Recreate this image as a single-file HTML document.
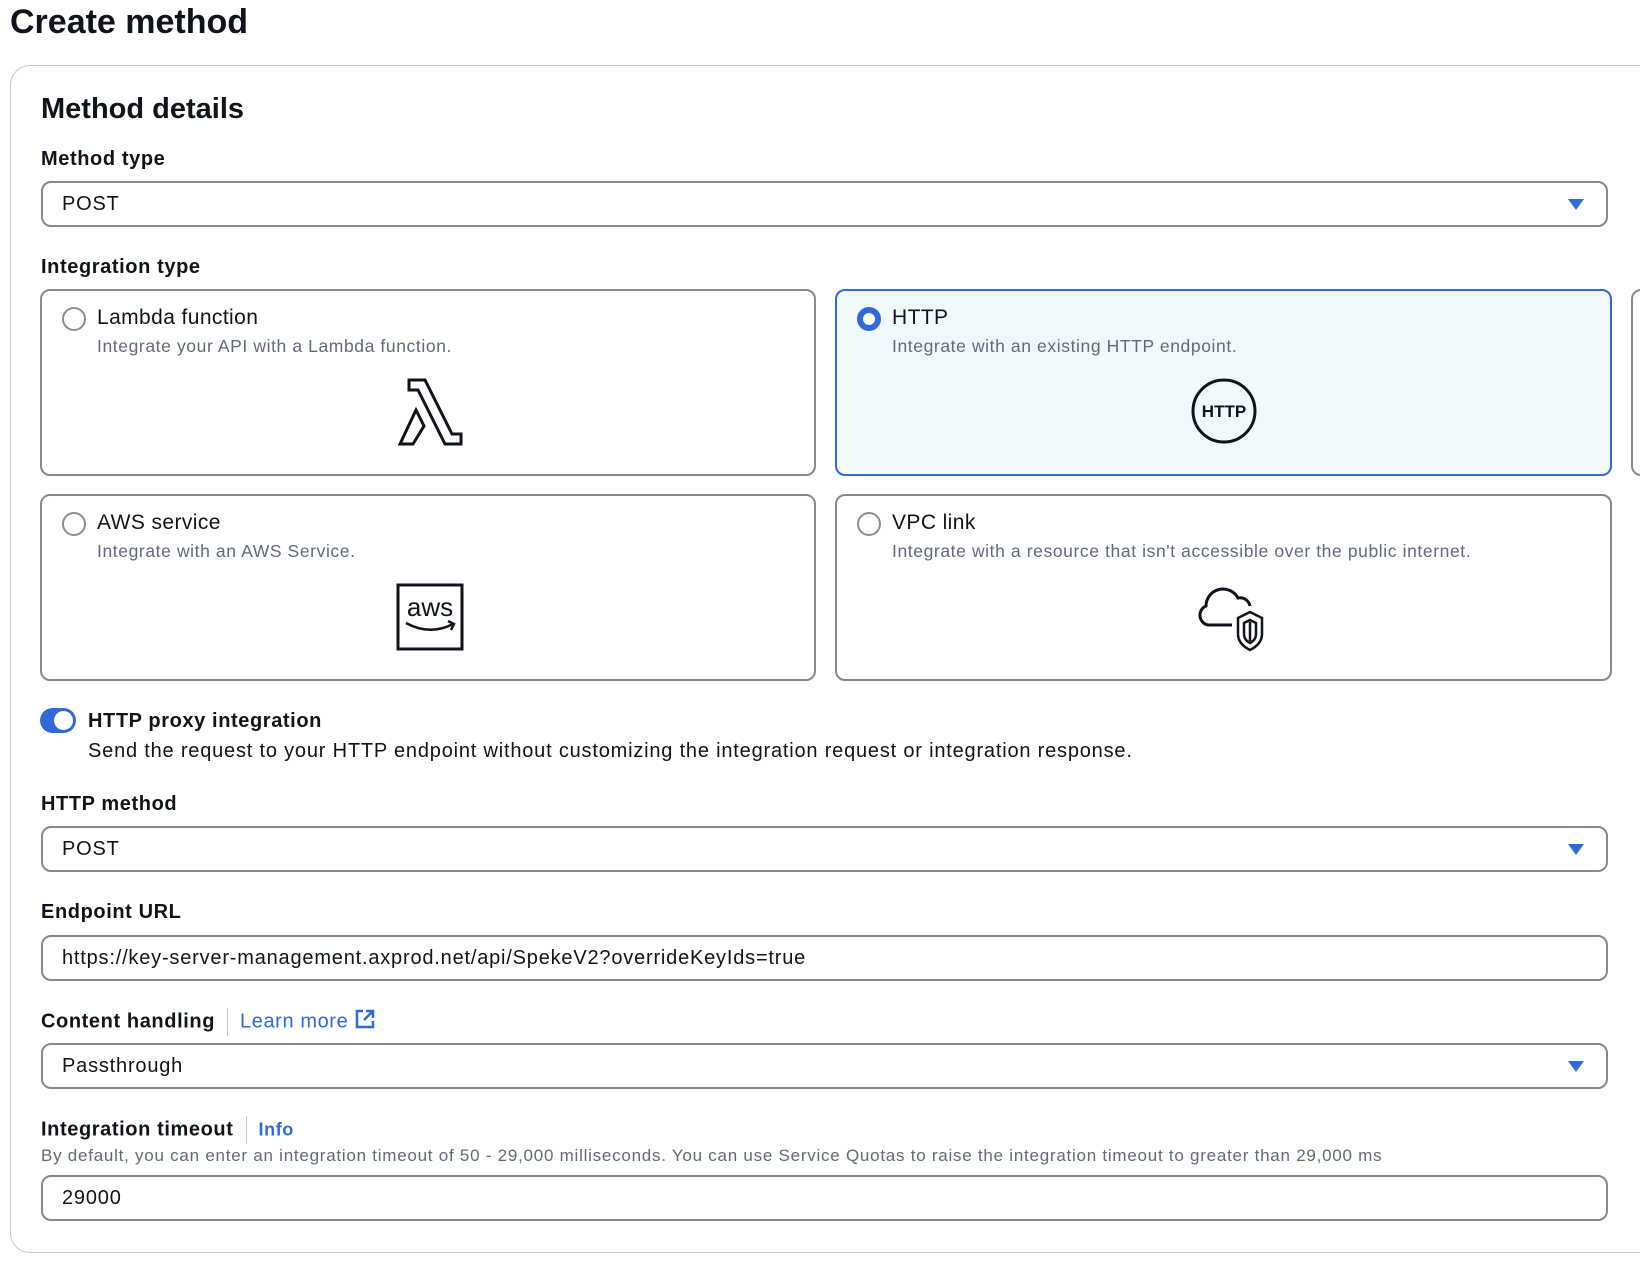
<!DOCTYPE html>
<html><head><meta charset="utf-8"><style>
*{box-sizing:border-box;margin:0;padding:0}
html,body{width:1640px;height:1266px;overflow:hidden;background:#fff;font-family:"Liberation Sans",sans-serif;color:#0f141a}
.a{position:absolute;white-space:nowrap}
.b{font-weight:bold}
.lbl{font-weight:bold;font-size:20px;line-height:24px;letter-spacing:0.6px}
.sel{position:absolute;left:41px;width:1567px;height:46px;border:2px solid #87878f;border-radius:10px;background:#fff}
.sel span{position:absolute;left:19px;top:0;line-height:42px;font-size:20px;letter-spacing:0.8px}
.arr{position:absolute;right:22px;top:16px;width:0;height:0;border-left:8px solid transparent;border-right:8px solid transparent;border-top:11px solid #2f6bd8}
.card{position:absolute;border:2px solid #87878f;border-radius:10px;background:#fff}
.card.on{border-color:#2e6bd9;background:#f1f9fd}
.rad{position:absolute;left:20px;top:16px;width:24px;height:24px;border:2px solid #8c8c94;border-radius:50%;background:#fff}
.on .rad{border:6px solid #2e6bd9}
.ct{position:absolute;left:55px;top:14px;font-size:21px;line-height:26px;letter-spacing:0.4px}
.cd{position:absolute;left:55px;top:44px;font-size:17.5px;line-height:22px;color:#5f6b7a;letter-spacing:0.6px}
.sep{display:inline-block;width:1px;height:28px;background:#c6c6cd;vertical-align:middle;margin:0 12px}
</style></head><body>
<div class="a b" style="left:10px;top:2px;font-size:34px;line-height:40px">Create method</div>
<div class="a" style="left:10px;top:65px;width:1700px;height:1188px;border:1px solid #c6c6cd;border-radius:20px"></div>
<div class="a b" style="left:41px;top:92px;font-size:29px;line-height:34px">Method details</div>

<div class="a lbl" style="left:41px;top:147px">Method type</div>
<div class="sel" style="top:181px"><span>POST</span><div class="arr"></div></div>

<div class="a lbl" style="left:41px;top:255px">Integration type</div>

<div class="card" style="left:40px;top:289px;width:776px;height:187px">
<div class="rad"></div><div class="ct">Lambda function</div><div class="cd">Integrate your API with a Lambda function.</div>
<svg style="position:absolute;left:356px;top:87px" width="66" height="68" viewBox="0 0 66 68"><path d="M11 2 H27 L54 56 H63 V66 H47 L20 12 H11 Z M18 32 L26 48 L15 66 H2 Z" fill="none" stroke="#0f141a" stroke-width="3" stroke-linejoin="miter"/></svg>
</div>
<div class="card on" style="left:835px;top:289px;width:777px;height:187px">
<div class="rad"></div><div class="ct">HTTP</div><div class="cd">Integrate with an existing HTTP endpoint.</div>
<svg style="position:absolute;left:352px;top:85px" width="70" height="70" viewBox="0 0 70 70"><circle cx="35" cy="35" r="31" fill="none" stroke="#0f141a" stroke-width="3"/><text x="35" y="41" text-anchor="middle" font-family="Liberation Sans" font-weight="bold" font-size="17" fill="#0f141a">HTTP</text></svg>
</div>
<div class="card" style="left:1631px;top:289px;width:200px;height:187px"></div>

<div class="card" style="left:40px;top:494px;width:776px;height:187px">
<div class="rad"></div><div class="ct">AWS service</div><div class="cd">Integrate with an AWS Service.</div>
<svg style="position:absolute;left:353px;top:86px" width="70" height="70" viewBox="0 0 70 70"><rect x="3" y="3" width="64" height="64" fill="none" stroke="#0f141a" stroke-width="3"/><text x="35" y="34" text-anchor="middle" font-family="Liberation Sans" font-size="26" fill="#0f141a">aws</text><path d="M11 41 Q35 54 58 42 M53 39 L59 42 L56 48" fill="none" stroke="#0f141a" stroke-width="2.5"/></svg>
</div>
<div class="card" style="left:835px;top:494px;width:777px;height:187px">
<div class="rad"></div><div class="ct">VPC link</div><div class="cd">Integrate with a resource that isn't accessible over the public internet.</div>
<svg style="position:absolute;left:355px;top:86px" width="72" height="72" viewBox="0 0 72 72"><path d="M40 43 H16 A10 10 0 0 1 14 24 A17 17 0 0 1 46 16 A10 10 0 0 1 58 24" fill="none" stroke="#0f141a" stroke-width="3"/><path d="M58 30 L46 36 V52 Q46 62 58 68 Q70 62 70 52 V36 Z M58 38 L52 41 V52 Q52 58 58 61 Q64 58 64 52 V41 Z" fill="none" stroke="#0f141a" stroke-width="2.5"/><line x1="58" y1="40" x2="58" y2="59" stroke="#0f141a" stroke-width="2.5"/></svg>
</div>

<div class="a" style="left:40px;top:708px;width:36px;height:25px;border-radius:13px;background:#2e6bd9"><div style="position:absolute;right:3px;top:3px;width:19px;height:19px;border-radius:50%;background:#fff"></div></div>
<div class="a lbl" style="left:88px;top:709px">HTTP proxy integration</div>
<div class="a" style="left:88px;top:739px;font-size:20px;line-height:24px;letter-spacing:0.8px">Send the request to your HTTP endpoint without customizing the integration request or integration response.</div>

<div class="a lbl" style="left:41px;top:792px">HTTP method</div>
<div class="sel" style="top:826px"><span>POST</span><div class="arr"></div></div>

<div class="a lbl" style="left:41px;top:900px">Endpoint URL</div>
<div class="sel" style="top:935px"><span>https://key-server-management.axprod.net/api/SpekeV2?overrideKeyIds=true</span></div>

<div class="a lbl" style="left:41px;top:1008px">Content handling<span class="sep"></span><span style="font-weight:normal;color:#2e6bd9">Learn more</span> <svg width="22" height="22" viewBox="0 0 22 22" style="vertical-align:-3px"><path d="M9 3 H3 V19 H19 V13 M12 3 H19 V10 M19 3 L10 12" fill="none" stroke="#2e6bd9" stroke-width="2.5"/></svg></div>
<div class="sel" style="top:1043px"><span>Passthrough</span><div class="arr"></div></div>

<div class="a lbl" style="left:41px;top:1116px">Integration timeout<span class="sep"></span><span style="font-size:18px;color:#2e6bd9">Info</span></div>
<div class="a" style="left:41px;top:1146px;font-size:17px;line-height:20px;color:#5f6b7a;letter-spacing:0.75px">By default, you can enter an integration timeout of 50 - 29,000 milliseconds. You can use Service Quotas to raise the integration timeout to greater than 29,000 ms</div>
<div class="sel" style="top:1175px"><span>29000</span></div>
</body></html>
